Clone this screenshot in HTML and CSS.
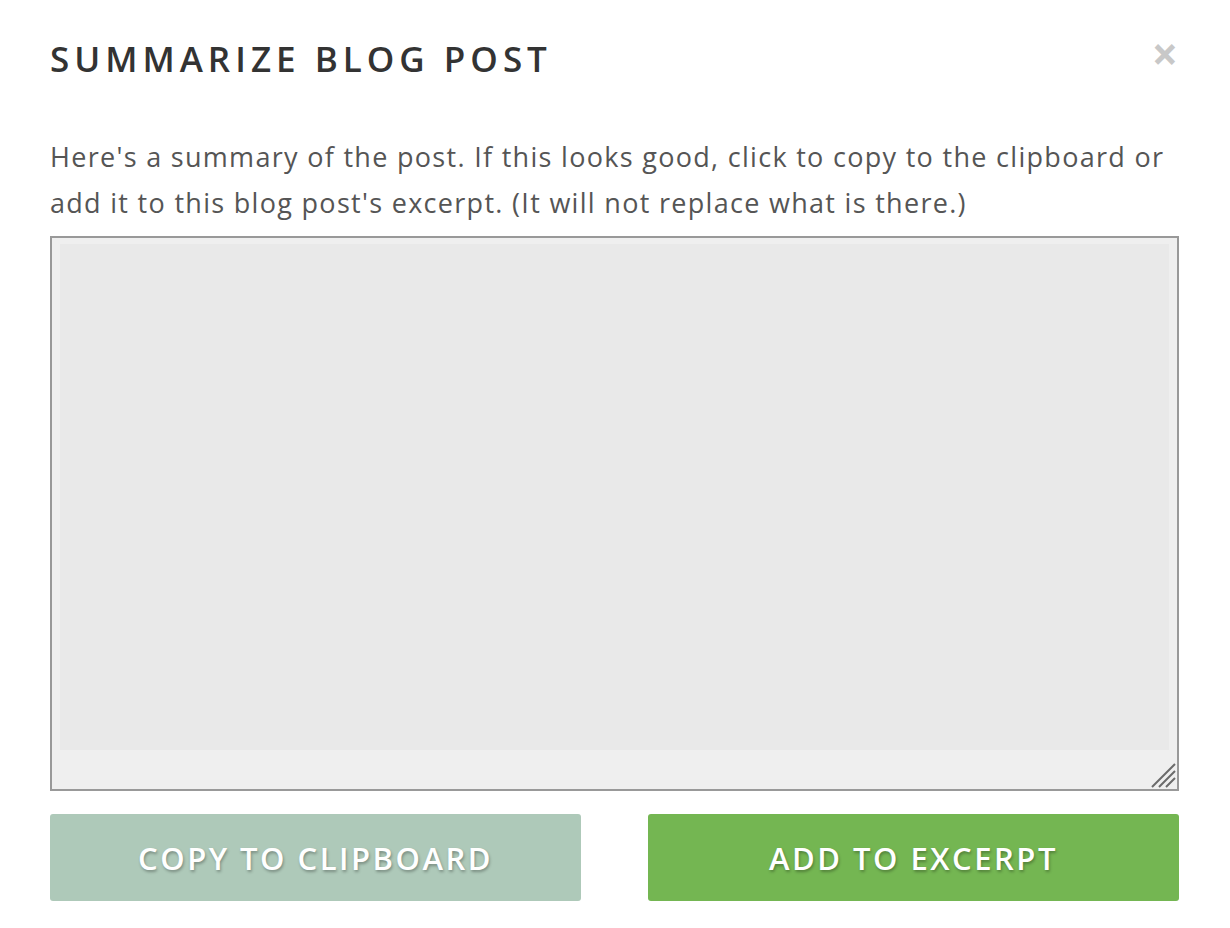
FILE: index.html
```html
<!DOCTYPE html>
<html lang="en">
<head>
    <meta charset="UTF-8">
    <meta name="viewport" content="width=device-width, initial-scale=1.0">
    <title>Summarize Blog Post</title>
    <link rel="stylesheet" href="styles.css">
</head>
<body>

    <div class="modal">
        <div class="modal-header">
            <h2 class="modal-title">Summarize Blog Post</h2>
            <span class="close-btn">&times;</span>
        </div>

        <p class="intro">Here's a summary of the post. If this looks good, click to copy to the clipboard or add it to this blog post's excerpt. (It will not replace what is there.)</p>

        <div class="summary-wrap">
            <textarea class="summary" id="summary"></textarea>
            <!-- resize grip -->
            <svg class="grip" width="26" height="26" viewBox="0 0 26 26">
                <path d="M2 25 L25 2 M9 25 L25 9 M16 25 L25 16" stroke="#6b6b6b" stroke-width="2" fill="none"/>
            </svg>
        </div>

        <div class="actions">
            <button class="btn btn-copy">Copy to clipboard</button>
            <button class="btn btn-add">Add to excerpt</button>
        </div>
    </div>

</body>
</html>
```

FILE: styles.css
```css
/* General reset */
* {
    margin: 0;
    padding: 0;
    box-sizing: border-box;
}

body {
    background-color: #ffffff;
    font-family: 'Open Sans', 'Noto Sans', sans-serif;
    color: #444;
}

/* Modal container */
.modal {
    width: 1230px;
    padding: 36px 51px 26px 50px;
}

.modal-header {
    display: flex;
    justify-content: space-between;
    align-items: center;
}

.modal-title {
    font-size: 35px;
    font-weight: 600;
    text-transform: uppercase;
    letter-spacing: 5px;
    color: #333;
    line-height: 46px;
}

.close-btn {
    color: #c8c8c8;
    font-size: 46px;
    font-weight: 700;
    line-height: 40px;
    margin-right: 1px;
    margin-top: -13px;
    cursor: pointer;
}

.intro {
    margin-top: 52px;
    font-size: 27px;
    letter-spacing: 1.3px;
    line-height: 46px;
    color: #555;
}

/* Summary box */
.summary-wrap {
    position: relative;
    margin-top: 10px;
}

.summary {
    display: block;
    width: 100%;
    height: 555px;
    border: 2px solid #999;
    padding: 6px 8px 39px 8px;
    background: linear-gradient(#e9e9e9, #e9e9e9) content-box, #efefef;
    resize: none;
    outline: none;
    font-family: inherit;
}

.grip {
    position: absolute;
    right: 3px;
    bottom: 3px;
    pointer-events: none;
}

/* Buttons */
.actions {
    display: flex;
    gap: 67px;
    margin-top: 23px;
}

.btn {
    flex: 1;
    height: 87px;
    border: none;
    border-radius: 3px;
    color: #fff;
    font-family: inherit;
    font-size: 31px;
    font-weight: 600;
    text-transform: uppercase;
    letter-spacing: 2.5px;
    text-shadow: 1px 2px 3px rgba(0, 0, 0, 0.3);
    cursor: pointer;
}

.btn-copy {
    background-color: #aec9b9;
}

.btn-add {
    background-color: #74b652;
}
```
